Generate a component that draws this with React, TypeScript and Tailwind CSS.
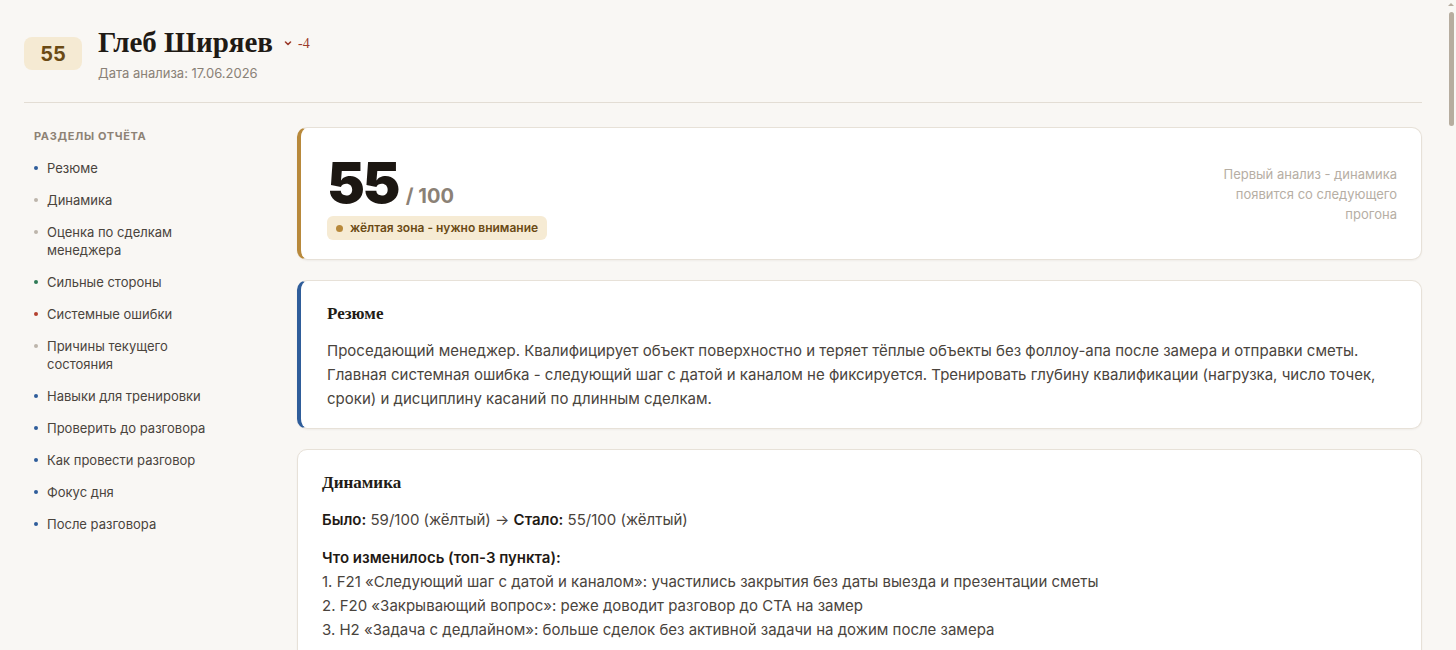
import type { ReactNode } from 'react'

type NavItem = { label: string; dot: string }

const navItems: NavItem[] = [
  { label: 'Резюме', dot: 'bg-[#2f5d9a]' },
  { label: 'Динамика', dot: 'bg-[#bdb5ab]' },
  { label: 'Оценка по сделкам менеджера', dot: 'bg-[#bdb5ab]' },
  { label: 'Сильные стороны', dot: 'bg-[#2f7a55]' },
  { label: 'Системные ошибки', dot: 'bg-[#b4412f]' },
  { label: 'Причины текущего состояния', dot: 'bg-[#bdb5ab]' },
  { label: 'Навыки для тренировки', dot: 'bg-[#2f5d9a]' },
  { label: 'Проверить до разговора', dot: 'bg-[#2f5d9a]' },
  { label: 'Как провести разговор', dot: 'bg-[#2f5d9a]' },
  { label: 'Фокус дня', dot: 'bg-[#2f5d9a]' },
  { label: 'После разговора', dot: 'bg-[#2f5d9a]' },
]

const serif = "font-['Liberation_Serif','DejaVu_Serif',serif]"

function Card({ accent, children }: { accent?: string; children: ReactNode }) {
  return (
    <section
      className={`bg-white rounded-[10px] border border-[#e7e1d8] shadow-[0_1px_2px_rgba(60,40,20,0.05)] ${
        accent ? `border-l-4 ${accent} pl-[26px]` : 'pl-6'
      } pr-6`}
    >
      {children}
    </section>
  )
}

function SectionTitle({ children }: { children: ReactNode }) {
  return <h2 className={`${serif} text-[17px] font-bold text-[#221c16] leading-6`}>{children}</h2>
}

export default function App() {
  return (
    <div className="min-h-screen bg-[#f9f7f4] font-['Inter','Noto_Sans',sans-serif] text-[#4a443d]">
      {/* page scrollbar thumb, as the reference shows it */}
      <div className="fixed right-0 top-0 w-[10px] h-screen">
        <div className="mx-auto mt-[3px] w-0 h-0 border-x-[3px] border-x-transparent border-b-[3px] border-b-[#b7ad9f]" />
        <div className="mx-auto mt-[6px] w-[5px] h-[114px] rounded-full bg-[#b7ad9f]" />
      </div>

      <div className="pl-6 pr-[34px] min-h-[3700px]">
        <header className="flex items-start gap-4 pt-[28px] pb-[18px] border-b border-[#e3ddd4]">
          <div className="mt-[9px] w-[58px] h-[33px] rounded-lg bg-[#f5ead3] flex items-center justify-center text-[20px] font-bold text-[#6b4a14]">
            55
          </div>
          <div>
            <div className="flex items-center gap-[10px]">
              <h1 className={`${serif} text-[29px] font-bold leading-[28px] text-[#1f1a15]`}>Глеб Ширяев</h1>
              <span className="flex items-center gap-[5px] text-[#9c3b2c] mt-[2px]">
                <svg width="10" height="10" viewBox="0 0 10 10" fill="none">
                  <path d="M2.5 4l2.5 2.5L7.5 4" stroke="currentColor" strokeWidth="1.6" strokeLinecap="round" strokeLinejoin="round" />
                </svg>
                <span className={`${serif} text-[14px]`}>-4</span>
              </span>
            </div>
            <p className="mt-[8px] text-[13px] text-[#8a8177]">Дата анализа: 17.06.2026</p>
          </div>
        </header>

        <div className="flex pt-6">
          <aside className="w-[273px] shrink-0 pl-[10px] pt-[1px]">
            <p className="text-[11px] font-bold tracking-[0.06em] text-[#8d8275] uppercase">Разделы отчёта</p>
            <ul className="mt-[15px] flex flex-col gap-[14px]">
              {navItems.map((item) => (
                <li key={item.label} className="flex items-start gap-[9px] text-[13px] leading-[18px] text-[#4a443d]">
                  <span className={`mt-[7px] w-[4px] h-[4px] rounded-full shrink-0 ${item.dot}`} />
                  <span className="max-w-[165px]">{item.label}</span>
                </li>
              ))}
            </ul>
          </aside>

          <main className="flex-1 flex flex-col gap-5">
            <Card accent="border-l-[#b8893b]">
              <div className="flex items-start justify-between pt-[24px] pb-[19px]">
                <div>
                  <div className="flex items-baseline gap-[8px]">
                    <span className="text-[57px] font-black leading-[62px] tracking-[-0.045em] text-[#1c1712]">55</span>
                    <span className="text-[20px] font-bold text-[#8b8176]">/ 100</span>
                  </div>
                  <span className="mt-[2px] inline-flex items-center gap-[7px] h-[24px] px-[9px] rounded-md bg-[#f6ebd4] text-[12px] font-semibold text-[#6b4a14]">
                    <span className="w-[7px] h-[7px] rounded-full bg-[#b8893b]" />
                    жёлтая зона - нужно внимание
                  </span>
                </div>
                <p className="mt-[12px] w-[190px] text-right text-[13px] leading-[20px] text-[#b6aea4]">
                  Первый анализ - динамика появится со следующего прогона
                </p>
              </div>
            </Card>

            <Card accent="border-l-[#2f5d9a]">
              <div className="pt-[21px] pb-[17px]">
                <SectionTitle>Резюме</SectionTitle>
                <p className="mt-[13px] text-[15px] leading-[24px] max-w-[1050px]">
                  Проседающий менеджер. Квалифицирует объект поверхностно и теряет тёплые объекты без фоллоу-апа после замера и
                  отправки сметы. Главная системная ошибка - следующий шаг с датой и каналом не фиксируется. Тренировать глубину
                  квалификации (нагрузка, число точек, сроки) и дисциплину касаний по длинным сделкам.
                </p>
              </div>
            </Card>

            <Card>
              <div className="pt-[21px] pb-6">
                <SectionTitle>Динамика</SectionTitle>
                <p className="mt-[13px] text-[15px] leading-[24px]">
                  <b className="font-semibold text-[#1f1a15]">Было:</b> 59/100 (жёлтый) → <b className="font-semibold text-[#1f1a15]">Стало:</b>{' '}
                  55/100 (жёлтый)
                </p>
                <p className="mt-[14px] text-[15px] leading-[24px] font-semibold text-[#1f1a15]">Что изменилось (топ-3 пункта):</p>
                <ol className="text-[15px] leading-[24px]">
                  <li>1. F21 «Следующий шаг с датой и каналом»: участились закрытия без даты выезда и презентации сметы</li>
                  <li>2. F20 «Закрывающий вопрос»: реже доводит разговор до СТА на замер</li>
                  <li>3. H2 «Задача с дедлайном»: больше сделок без активной задачи на дожим после замера</li>
                </ol>
                <p className="mt-[14px] text-[15px] leading-[24px]">
                  Общий тренд: просадка на этапе после замера, первичный контакт держится на прежнем уровне.
                </p>
              </div>
            </Card>

            <Card accent="border-l-[#bdb5ab]">
              <div className="pt-[21px] pb-6">
                <SectionTitle>Оценка по сделкам менеджера</SectionTitle>
                <p className="mt-[13px] text-[15px] leading-[24px]">
                  Проанализировано 14 сделок за период. В 9 из них следующий шаг не зафиксирован, в 4 смета отправлена без
                  повторного касания в течение 48 часов.
                </p>
              </div>
            </Card>

            <Card accent="border-l-[#2f7a55]">
              <div className="pt-[21px] pb-6">
                <SectionTitle>Сильные стороны</SectionTitle>
                <p className="mt-[13px] text-[15px] leading-[24px]">
                  Быстро выходит на контакт, вежлив и последователен в презентации. Хорошо объясняет состав работ и сроки
                  монтажа.
                </p>
              </div>
            </Card>

            <Card accent="border-l-[#b4412f]">
              <div className="pt-[21px] pb-6">
                <SectionTitle>Системные ошибки</SectionTitle>
                <p className="mt-[13px] text-[15px] leading-[24px]">
                  Не фиксирует дату и канал следующего контакта. Не задаёт закрывающий вопрос на замер. Оставляет сделки без
                  активной задачи.
                </p>
              </div>
            </Card>
          </main>
        </div>
      </div>
    </div>
  )
}
